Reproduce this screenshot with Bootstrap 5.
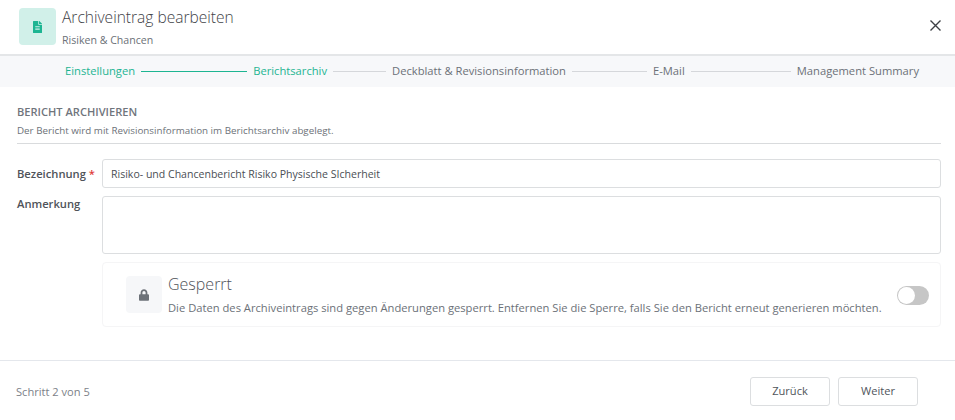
<!doctype html>
<html lang="de"><head><meta charset="utf-8"><title>Archiveintrag</title>
<link href="https://cdn.jsdelivr.net/npm/bootstrap@5.3.0/dist/css/bootstrap.min.css" rel="stylesheet">
<style>
html,body{height:420px;overflow:hidden;background:#fff}
body{font-family:"Open Sans",sans-serif;color:#6c7178;font-size:11px}
.dlg-head{height:56px;border-bottom:2px solid #e4e6e8;padding:8px 14px 0 19px}
.dlg-icon{width:37px;height:37px;border-radius:4px;background:#d1f0e9}
.dlg-title{font-size:15.55px;font-weight:300;line-height:18px;color:#3f4348;margin-left:6px}
.dlg-sub{font-size:10.6px;line-height:14px;color:#6c7178;margin-left:6px;margin-top:7px}
.dlg-x{border:0;background:none;padding:0;width:11px;height:11px;margin-top:12px;line-height:0}
.stepper{height:31px;background:#f7f8fa;padding:0 36px 0 65px;font-size:11.2px;color:#6c7178}
.grow-line{height:1px;background:#d5d7db;margin:0 6px}
.grow-line.done{background:#1db592}
.gl-a{flex:106 1 0}.gl-b{flex:53 1 0}.gl-c{flex:75 1 0}.gl-d{flex:100 1 0}
.stepper .done-txt{color:#1db592}
.sect{padding:18px 14px 0 17px}
.sect-title{font-size:11.1px;font-weight:600;line-height:14px;color:#70757c}
.sect-sub{font-size:9.8px;line-height:13px;margin-top:5px;padding-bottom:6px;border-bottom:1px solid #d9dbdd}
.row-one{margin-top:15px}
.row-next{margin-top:8px}
.frm-label{width:85px;font-size:11.2px;font-weight:600;color:#4f5359;flex:none}
.lbl-mid{padding-top:1px}
.lbl-top{line-height:15px}
.req{color:#e03b3b}
.fld{flex:1;border:1px solid #dcdee0;border-radius:3px;height:29px;font-size:10.55px;color:#4a4e54;padding:0 8px;line-height:28px;background:#fff}
.fld-area{height:58px}
.lock-card{margin-left:85px;height:65px;border:1px solid #f5f5f6;border-radius:4px;padding:13px 11px 0 23px}
.lock-icon{width:36px;height:37px;background:#f6f7f9;border-radius:4px;flex:none}
.lock-body{margin-left:6px;margin-top:-1px}
.lock-title{font-size:16px;font-weight:300;line-height:18px;color:#4f5359}
.lock-desc{font-size:11.2px;line-height:14px;margin-top:8px;color:#6c7178}
.tgl{width:32px;height:19px;border-radius:10px;background:#c6c6c6;position:relative;margin-top:10px;flex:none}
.tgl::before{content:"";position:absolute;left:1px;top:1px;width:17px;height:17px;border-radius:50%;background:#fff}
.foot{position:absolute;left:0;right:0;top:360px;height:60px;border-top:1px solid #e4e7ec;padding:16px 37px 0 16px}
.foot-txt{font-size:11.1px;line-height:29px;color:#7c8188}
.step-btn{width:80px;height:29px;border:1px solid #dcdee0;border-radius:3px;background:#fff;font-size:11.1px;color:#50555b;padding:0}
</style></head><body>
<div class="dlg-head d-flex">
  <div class="dlg-icon d-flex align-items-center justify-content-center">
    <svg width="9" height="12" viewBox="0 0 384 512" fill="#1db592"><path d="M224 136V0H24C10.700 0 0 10.700 0 24v464c0 13.300 10.700 24 24 24h336c13.300 0 24-10.700 24-24V160H248c-13.200 0-24-10.800-24-24zm64 236c0 6.600-5.400 12-12 12H108c-6.600 0-12-5.400-12-12v-8c0-6.600 5.400-12 12-12h168c6.600 0 12 5.400 12 12v8zm0-64c0 6.600-5.400 12-12 12H108c-6.600 0-12-5.400-12-12v-8c0-6.600 5.400-12 12-12h168c6.600 0 12 5.400 12 12v8zm0-72v8c0 6.600-5.400 12-12 12H108c-6.600 0-12-5.400-12-12v-8c0-6.600 5.400-12 12-12h168c6.600 0 12 5.400 12 12zm96-114.100v6.100H256V0h6.100c6.400 0 12.500 2.500 17 7l97.900 98c4.500 4.500 7 10.600 7 16.900z"/></svg>
  </div>
  <div class="flex-grow-1">
    <div class="dlg-title">Archiveintrag bearbeiten</div>
    <div class="dlg-sub">Risiken &amp; Chancen</div>
  </div>
  <button class="dlg-x" aria-label="Schließen"><svg width="11" height="11" viewBox="0 0 11 11" stroke="#3d4045" stroke-width="1.400" fill="none"><path d="M.5.5l10 10M10.500.5l-10 10"/></svg></button>
</div>
<div class="stepper d-flex align-items-center">
  <span class="done-txt">Einstellungen</span><span class="grow-line gl-a done"></span>
  <span class="done-txt">Berichtsarchiv</span><span class="grow-line gl-b"></span>
  <span>Deckblatt &amp; Revisionsinformation</span><span class="grow-line gl-c"></span>
  <span>E-Mail</span><span class="grow-line gl-d"></span>
  <span>Management Summary</span>
</div>
<div class="sect">
  <div class="sect-title">BERICHT ARCHIVIEREN</div>
  <div class="sect-sub">Der Bericht wird mit Revisionsinformation im Berichtsarchiv abgelegt.</div>
  <div class="d-flex align-items-center row-one"><div class="frm-label lbl-mid">Bezeichnung <span class="req">*</span></div><div class="fld">Risiko- und Chancenbericht Risiko Physische SIcherheit</div></div>
  <div class="d-flex row-next"><div class="frm-label lbl-top">Anmerkung</div><div class="fld fld-area"></div></div>
  <div class="lock-card d-flex row-next">
    <div class="lock-icon d-flex align-items-center justify-content-center">
      <svg width="10" height="12" viewBox="0 0 448 512" fill="#6c7178"><path d="M400 224h-24v-72C376 68.200 307.800 0 224 0S72 68.200 72 152v72H48c-26.500 0-48 21.500-48 48v192c0 26.500 21.500 48 48 48h352c26.500 0 48-21.500 48-48V272c0-26.500-21.500-48-48-48zm-104 0H152v-72c0-39.700 32.300-72 72-72s72 32.300 72 72v72z"/></svg>
    </div>
    <div class="flex-grow-1 lock-body">
      <div class="lock-title">Gesperrt</div>
      <div class="lock-desc">Die Daten des Archiveintrags sind gegen Änderungen gesperrt. Entfernen Sie die Sperre, falls Sie den Bericht erneut generieren möchten.</div>
    </div>
    <div class="tgl"></div>
  </div>
</div>
<div class="foot d-flex justify-content-between">
  <div class="foot-txt">Schritt 2 von 5</div>
  <div class="d-flex gap-2"><button class="step-btn">Zurück</button><button class="step-btn">Weiter</button></div>
</div>
<script src="https://cdn.jsdelivr.net/npm/bootstrap@5.3.0/dist/js/bootstrap.bundle.min.js"></script>
</body></html>
